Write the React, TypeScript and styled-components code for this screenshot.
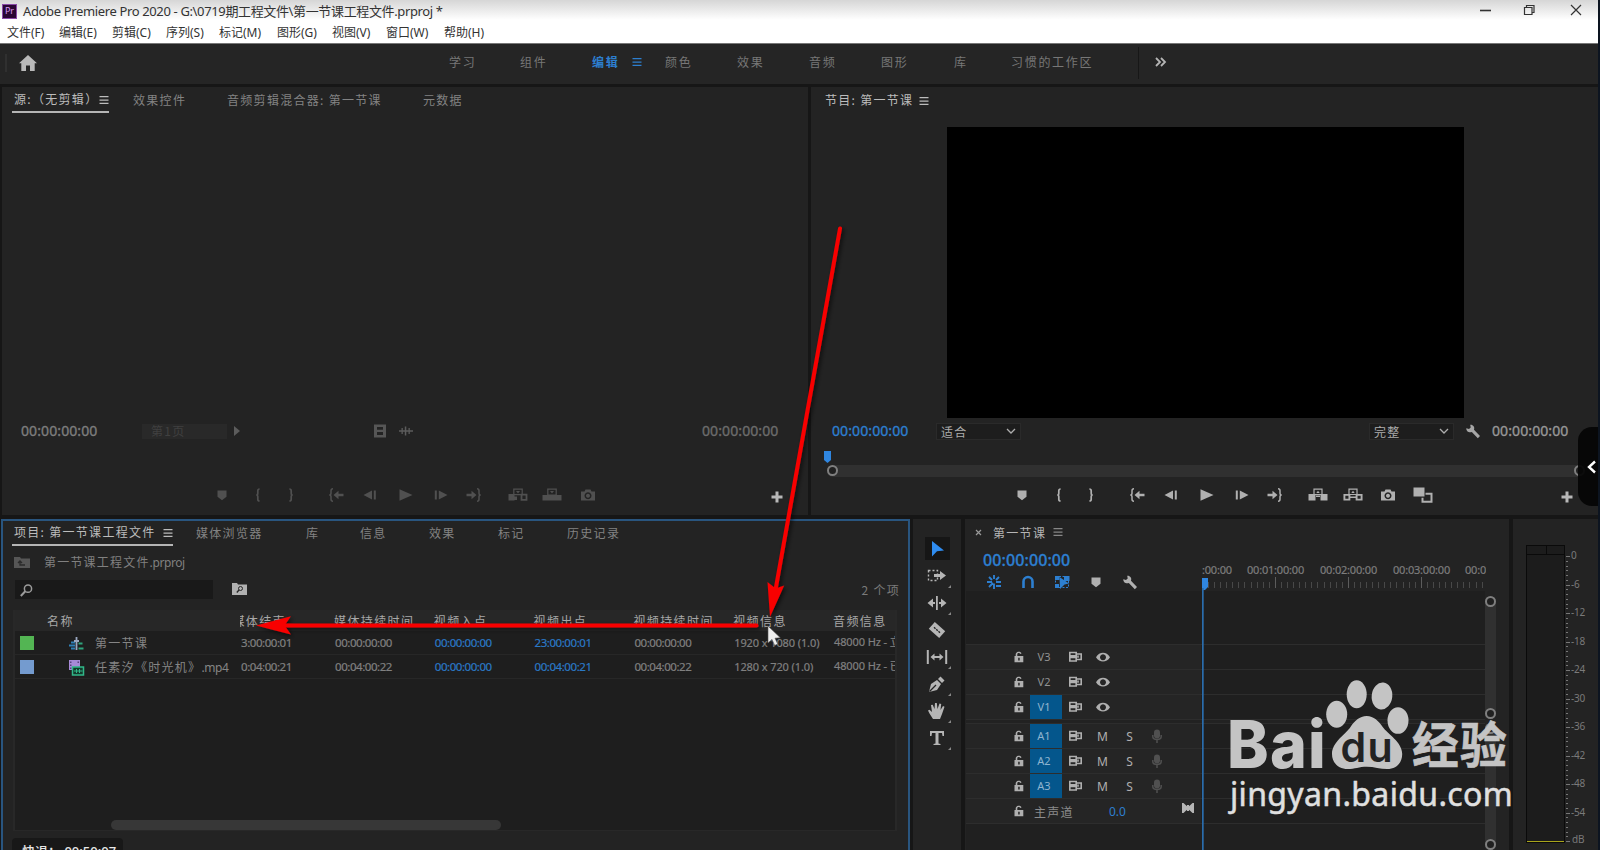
import React from 'react';
import styled, { createGlobalStyle } from 'styled-components';

type IconName =
  | 'marker' | 'markIn' | 'markOut' | 'goIn' | 'stepBack' | 'play' | 'stepFwd' | 'goOut'
  | 'insert' | 'overwrite' | 'lift' | 'extract' | 'camera' | 'compare' | 'plus' | 'burger'
  | 'wrench' | 'chevron' | 'lock' | 'sync' | 'eye' | 'mic' | 'film' | 'wave';

// every glyph is drawn in a 22 x 18 box
const glyphs: Record<IconName, React.ReactNode> = {
  marker: <path d="M6.5 4.5h9v6.200L11 14.200 6.500 10.700z" />,
  markIn: <path d="M12.600 3q-1.800 0-1.800 1.800v2.400Q10.800 9 9.300 9q1.500 0 1.500 1.800v2.400q0 1.800 1.800 1.800" fill="none" stroke="currentColor" strokeWidth="1.700" />,
  markOut: <path d="M9.400 3q1.800 0 1.800 1.800v2.400Q11.200 9 12.700 9q-1.500 0-1.500 1.800v2.400q0 1.800-1.800 1.800" fill="none" stroke="currentColor" strokeWidth="1.700" />,
  goIn: (
    <>
      <path d="M8 2.800q-2 0-2 2v2.400Q6 9 4.300 9 6 9 6 10.800v2.400q0 2 2 2" fill="none" stroke="currentColor" strokeWidth="1.500" />
      <path d="M8.500 9l5-4.300v3H18.500v2.600H13.500v3z" />
    </>
  ),
  stepBack: <path d="M4.500 9l8.500-4.600v9.200zM14.800 4.400h2v9.200h-2z" />,
  play: <path d="M4.500 3.200L17.500 9 4.500 14.800z" />,
  stepFwd: <path d="M4.800 4.400h2v9.200h-2zM8.800 4.400L17.500 9l-8.700 4.600z" />,
  goOut: (
    <>
      <path d="M14 2.800q2 0 2 2v2.400Q16 9 17.700 9 16 9 16 10.800v2.400q0 2-2 2" fill="none" stroke="currentColor" strokeWidth="1.500" />
      <path d="M13.500 9l-5-4.300v3h-5v2.600h5v3z" />
    </>
  ),
  insert: (
    <>
      <path d="M1.500 8h6v6.500h-6zM7 10.500h3v3.500H7z" />
      <path d="M6.800 3.200h8.400v5.500H6.800z" fill="none" stroke="currentColor" strokeWidth="1.200" />
      <path d="M9 5h4l-2 2.600z" />
      <path d="M14.500 8.700h5v5.100h-5z" fill="none" stroke="currentColor" strokeWidth="1.800" />
    </>
  ),
  overwrite: (
    <>
      <path d="M1.500 9h19v5.500h-19z" />
      <path d="M6.800 3.200h8.400V9H6.800z" fill="none" stroke="currentColor" strokeWidth="1.200" />
      <path d="M9 5h4l-2 2.600z" />
    </>
  ),
  lift: (
    <>
      <path d="M1.500 8h7v6.500h-7zM13.500 8h7v6.500h-7zM9 9.500h4v1.500H9z" />
      <path d="M7 3.200h8v5.300H7z" fill="none" stroke="currentColor" strokeWidth="1.200" />
      <path d="M9.300 7l1.700-2.200L12.700 7z" />
    </>
  ),
  extract: (
    <>
      <path d="M2.400 8.900h5v4.700h-5zM14.600 8.900h5v4.700h-5z" fill="none" stroke="currentColor" strokeWidth="1.900" />
      <path d="M7 3.200h8v5.300H7z" fill="none" stroke="currentColor" strokeWidth="1.200" />
      <path d="M9.300 7l1.700-2.200L12.700 7zM8 10.500h6v1.500H8z" />
    </>
  ),
  camera: (
    <path fillRule="evenodd" d="M4 5.500h3.500l1-2h5l1 2H18v9H4zM11 6.300a3.500 3.500 0 1 0 .01 0zM11 7.800a2 2 0 1 1-.01 0z" />
  ),
  compare: (
    <>
      <path d="M1.500 1.500h11v9h-11z" />
      <path d="M13.500 7.700h6v8h-9v-4" fill="none" stroke="currentColor" strokeWidth="2" />
    </>
  ),
  plus: <path d="M9.500 3.500h3v4h4v3h-4v4h-3v-4h-4v-3h4z" />,
  burger: <path d="M6.500 5h9v1.300h-9zM6.500 8.400h9v1.300h-9zM6.500 11.800h9v1.300h-9z" />,
  wrench: <path d="M4.300 6.200L7 7l1.700-1.500-.5-2.700C11 2.500 13 5 12 7.800l6 6.200-2.200 2.200-6-6.200C7 11 4 9 4.300 6.200z" />,
  chevron: <path d="M7 7l4 4 4-4" fill="none" stroke="currentColor" strokeWidth="1.300" />,
  lock: (
    <path fillRule="evenodd" d="M6.500 8h1.200V6.200C7.700 3.500 13 3 13.500 5.500l-1.300.4C11.700 4.500 9.300 5 9.300 6.400V8h6v6.300H6.500zM10.200 9.700v2.900h1.500V9.700z" />
  ),
  sync: (
    <path d="M4.800 4.500h6.400v3.400H4.800zM4.800 9.500h6.400V13H4.800zM11.200 6h5v5.500h-5M13 7.500v2.300" fill="none" stroke="currentColor" strokeWidth="1.600" />
  ),
  eye: (
    <path fillRule="evenodd" d="M4 9.200C7.500 3.400 14.500 3.400 18 9.200 14.500 15 7.500 15 4 9.200zM11 6.200a3 3 0 1 0 .01 0z" />
  ),
  mic: (
    <>
      <rect x="8" y="2.500" width="6" height="9" rx="3" />
      <path d="M6.800 8v1.500q0 3 4.200 3t4.200-3V8M11 12.500V16" fill="none" stroke="currentColor" strokeWidth="1.500" />
    </>
  ),
  film: <path fillRule="evenodd" d="M5 2.500h12v13H5zM8 5v2.800h6V5zM8 10v3h6v-3z" opacity=".9" />,
  wave: <path d="M4 8.300h14v1.400H4zM6.500 6h1.300v6H6.500zM9.800 4.500h1.500v9H9.800zM13.500 6h1.300v6h-1.300z" />,
};

const Icon: React.FC<{ name: IconName }> = ({ name }) => (
  <GlyphSvg viewBox="0 0 22 18" fill="currentColor">
    {glyphs[name]}
  </GlyphSvg>
);

const menus = [
  ['文件(F)', 52], ['编辑(E)', 53], ['剪辑(C)', 54], ['序列(S)', 53], ['标记(M)', 58],
  ['图形(G)', 55], ['视图(V)', 54], ['窗口(W)', 58], ['帮助(H)', 50],
] as const;

const workspaces = [
  ['学习', 71], ['组件', 72], ['编辑', 73], ['颜色', 72], ['效果', 72],
  ['音频', 72], ['图形', 73], ['库', 57], ['习惯的工作区', 127],
] as const;

const transport: [IconName, number][] = [
  ['marker', 0], ['markIn', 14.5], ['markOut', 10.5], ['goIn', 23.5], ['stepBack', 12],
  ['play', 14], ['stepFwd', 13], ['goOut', 11],
];
const sourceTransport: [IconName, number][] = [
  ...transport, ['insert', 21.5], ['overwrite', 12.5], ['camera', 13.5],
];
const programTransport: [IconName, number][] = [
  ...transport, ['lift', 21.5], ['extract', 12.5], ['camera', 13.5], ['compare', 13],
];

const columns = ['媒体持续时间', '视频入点', '视频出点', '视频持续时间', '视频信息', '音频信息'];

const clips = [
  {
    kind: 'sequence', color: '#53b553', name: '第一节课', ext: '', end: '3:00:00:01',
    cells: ['00:00:00:00', '00:00:00:00', '23:00:00:01', '00:00:00:00', '1920 x 1080 (1.0)', '48000 Hz - 立体声'],
  },
  {
    kind: 'clip', color: '#749bcf', name: '任素汐《时光机》', ext: '.mp4', end: '0:04:00:21',
    cells: ['00:04:00:22', '00:00:00:00', '00:04:00:21', '00:04:00:22', '1280 x 720 (1.0)', '48000 Hz - 已压缩'],
  },
];

const dbMarks = ['0', '-6', '-12', '-18', '-24', '-30', '-36', '-42', '-48', '-54'];

const Transport: React.FC<{ items: [IconName, number][]; dim?: boolean }> = ({ items, dim }) => (
  <TransportRow $dim={dim}>
    {items.map(([name, gap]) => (
      <TransportSlot key={name} $gap={gap}>
        <Icon name={name} />
      </TransportSlot>
    ))}
    <AddButton>
      <Icon name="plus" />
    </AddButton>
  </TransportRow>
);

const TitleBar = () => (
  <Header>
    <TitleRow>
      <AppBadge>Pr</AppBadge>
      <TitleText>Adobe Premiere Pro 2020 - G:\0719期工程文件\第一节课工程文件.prproj *</TitleText>
      <WindowButtons viewBox="0 0 110 20" fill="none" stroke="#333" strokeWidth="1.200">
        <path d="M4 9.500h11" strokeWidth="1.600" />
        <path d="M48.500 6.500h7.500v7h-7.500zM50.500 6.500V4.500h7.500v7h-2" />
        <path d="M95 4l10 10M105 4L95 14" />
      </WindowButtons>
    </TitleRow>
    <MenuRow>
      {menus.map(([label, w]) => (
        <MenuItem key={label} $w={w}>{label}</MenuItem>
      ))}
    </MenuRow>
  </Header>
);

const WorkspaceBar = () => (
  <Workspaces>
    <HomeGrip />
    <HomeIcon viewBox="0 0 18 16" fill="#b9b9b9">
      <path d="M9 0l9 8.200h-2.300V16H11v-5.500H7V16H2.300V8.200H0z" />
    </HomeIcon>
    {workspaces.map(([label, w]) => (
      <WorkspaceItem key={label} $w={w} $active={label === '编辑'}>
        {label}
        {label === '编辑' && <Icon name="burger" />}
      </WorkspaceItem>
    ))}
    <MoreWorkspaces>
      <svg width="12" height="10" viewBox="0 0 12 10" fill="none" stroke="#b5b5b5" strokeWidth="1.800">
        <path d="M1 1l4 4-4 4M6 1l4 4-4 4" />
      </svg>
    </MoreWorkspaces>
  </Workspaces>
);

const SourceMonitor = () => (
  <SourcePanel>
    <Tabs>
      <Tab $w={119} $active>
        <TabUnderline $w={97}>源:（无剪辑）<Icon name="burger" /></TabUnderline>
      </Tab>
      <Tab $w={94}>效果控件</Tab>
      <Tab $w={196}>音频剪辑混合器: 第一节课</Tab>
      <Tab $w={60}>元数据</Tab>
    </Tabs>
    <MonitorSpace />
    <SourceControls>
      <TimeCode $color="#7d7d7d">00:00:00:00</TimeCode>
      <PageSelect>第1页</PageSelect>
      <PageArrow />
      <MediaToggles>
        <Icon name="film" />
        <Icon name="wave" />
      </MediaToggles>
      <TimeCode $color="#6c6c6c">00:00:00:00</TimeCode>
    </SourceControls>
    <Transport items={sourceTransport} dim />
  </SourcePanel>
);

const ProgramMonitor = () => (
  <ProgramPanel>
    <Tabs>
      <Tab $w={110} $active>节目: 第一节课<Icon name="burger" /></Tab>
    </Tabs>
    <Screen />
    <ProgramControls>
      <TimeCode $color="#2d7fd0">00:00:00:00</TimeCode>
      <Select $gap={27}>适合<Icon name="chevron" /></Select>
      <Select $gap={348}>完整<Icon name="chevron" /></Select>
      <Icon name="wrench" />
      <TimeCode $color="#979797">00:00:00:00</TimeCode>
    </ProgramControls>
    <Scrubber>
      <ScrubHead viewBox="0 0 8 12"><path d="M0 0h7v9l-3.500 3L0 9z" fill="#2f86e0" /></ScrubHead>
      <ScrubTrack>
        <Knob />
        <Knob />
      </ScrubTrack>
    </Scrubber>
    <Transport items={programTransport} />
  </ProgramPanel>
);

const SequenceIcon = () => (
  <svg width="17" height="15" viewBox="0 0 17 15" fill="none" strokeWidth="1.500">
    <path d="M3 6.500h4M1 9.500h6M3 12.500h4" stroke="#2f7fb5" strokeWidth="2" />
    <path d="M8.500 1v13M6 5h5" stroke="#9aa7c0" strokeWidth="1.800" />
    <path d="M10.500 7.500h4M10.500 12.500h5" stroke="#2fa37c" strokeWidth="2.200" />
  </svg>
);

const ClipIcon = () => (
  <svg width="17" height="16" viewBox="0 0 17 16">
    <path d="M1 0h11v10H1z" fill="#a88ad8" />
    <path d="M2 1.500h1.500v1.500H2zM2 4.500h1.500V6H2zM2 7.500h1.500V9H2zM9.500 1.500H11V3H9.500z" fill="#59427f" />
    <path d="M4.500 7h11v8h-11z" fill="#133a2c" stroke="#31b888" strokeWidth="1.500" />
    <path d="M6 11h8.500M8.500 9v4M11.500 9v4" stroke="#31b888" />
  </svg>
);

const ProjectPanel = () => (
  <Project>
    <Tabs>
      <Tab $w={182} $active>
        <TabUnderline $w={161}>项目: 第一节课工程文件<Icon name="burger" /></TabUnderline>
      </Tab>
      <Tab $w={110}>媒体浏览器</Tab>
      <Tab $w={54}>库</Tab>
      <Tab $w={69}>信息</Tab>
      <Tab $w={69}>效果</Tab>
      <Tab $w={69}>标记</Tab>
      <Tab $w={60}>历史记录</Tab>
    </Tabs>
    <Breadcrumb>
      <svg width="16" height="12" viewBox="0 0 16 12">
        <path d="M0 1h6l1 1.500h9V12H0z" fill="#565656" />
        <path d="M11 9H6V5.500M4 7l2-2 2 2" fill="none" stroke="#2a2a2a" strokeWidth="1.300" />
      </svg>
      <div>第一节课工程文件<Latin>.prproj</Latin></div>
    </Breadcrumb>
    <SearchRow>
      <SearchBox>
        <svg width="13" height="13" viewBox="0 0 13 13" fill="none" stroke="#9b9b9b">
          <circle cx="8" cy="4.700" r="3.600" strokeWidth="1.500" />
          <path d="M5.300 7.300L.8 12" strokeWidth="2" />
        </svg>
      </SearchBox>
      <svg width="15" height="12" viewBox="0 0 15 12">
        <path d="M0 0h5l1 1.500h9V12H0z" fill="#b0b0b0" />
        <circle cx="8.500" cy="5.500" r="2" fill="none" stroke="#262626" />
        <path d="M7 7L4.800 9.500" stroke="#262626" strokeWidth="1.300" />
      </svg>
      <ItemCount>2 个项</ItemCount>
    </SearchRow>
    <ClipTable>
      <ClipHead>
        <NameHead>名称</NameHead>
        <CutCell><span>媒体结束</span></CutCell>
        {columns.map((c) => <HeadCell key={c}>{c}</HeadCell>)}
      </ClipHead>
      {clips.map((clip) => (
        <ClipRow key={clip.name}>
          <Swatch $color={clip.color} />
          <KindIcon>{clip.kind === 'sequence' ? <SequenceIcon /> : <ClipIcon />}</KindIcon>
          <ClipName>{clip.name}<Latin>{clip.ext}</Latin></ClipName>
          <DataCell>{clip.end}</DataCell>
          {clip.cells.map((cell, i) => (
            <DataCell key={i} $link={i === 1 || i === 2} $info={i > 3}>{cell}</DataCell>
          ))}
        </ClipRow>
      ))}
      <ClipScroll />
    </ClipTable>
    <SeekToast>快退： 00:50:07</SeekToast>
  </Project>
);

const toolGlyphs: React.ReactNode[] = [
  <path d="M6 3l12 9.500-7 .8L6 18.500z" fill="#2f8cf0" />,
  <>
    <path d="M2.500 5.500h9v10h-9z" fill="none" stroke="#b5b5b5" strokeWidth="1.400" strokeDasharray="2 2" />
    <path d="M8 9h6V6l6 4.500-6 4.500v-3H8z" />
  </>,
  <path d="M10 4h1.800v14H10zM1.500 11l5.500-4.500V10h2v2H7v3.500zM20.500 11L15 6.500V10h-2v2h2v3.500z" />,
  <g transform="rotate(42 11 11)">
    <path fillRule="evenodd" d="M4 6.500h14v9H4zM7 10.300h2v1.400H7zM10 10.300h2v1.400h-2zM13 10.300h2v1.400h-2z" />
  </g>,
  <path d="M.8 4h2v14h-2zM19.200 4h2v14h-2zM4.500 11l4-3.500V10h5V7.500l4 3.500-4 3.500V12h-5v2.500z" />,
  <>
    <path d="M3 19l2-8 6-4 4 4-4 6z" />
    <path d="M12 6l2.500-2.500 4 4L16 10z" />
    <path d="M3.500 18.500L10 12" stroke="#232323" strokeWidth="1.200" />
  </>,
  <path d="M7 19l-3.500-5.500L2 10.500l1.500-.7L6 12 5 5l1.700-.3L8.500 9 9 3h1.800l.7 6L13.500 3.500l1.700.5-.7 6 2.500-4 1.500.8L16 14l-2 5z" />,
  <path d="M4 4h14v5h-1.500L16 6h-3.500v10.500l2 .5v1h-7v-1l2-.5V6H6l-.5 3H4z" />,
];

const ToolStrip = () => (
  <Tools>
    {toolGlyphs.map((g, i) => (
      <ToolButton key={i} $selected={i === 0} $more={![0, 3].includes(i)}>
        <svg width="22" height="22" viewBox="0 0 22 22" fill="#b5b5b5">{g}</svg>
      </ToolButton>
    ))}
  </Tools>
);

const Track: React.FC<{ name: string }> = ({ name }) => {
  const audio = name[0] === 'A';
  return (
    <TrackRow>
      <TrackHeader>
        <Icon name="lock" />
        <TrackName $on={audio || name === 'V1'}>{name}</TrackName>
        <Icon name="sync" />
        {audio ? <span>M</span> : <Icon name="eye" />}
        {audio && <span>S</span>}
        {audio && <MicCell><Icon name="mic" /></MicCell>}
      </TrackHeader>
      <Lane />
    </TrackRow>
  );
};

const minorTicks = Array.from({ length: 46 }, (_, i) => 8 + i * 6.08);

const Timeline = () => (
  <TimelinePanel>
    <SequenceTab>
      <svg width="7" height="7" viewBox="0 0 7 7" stroke="#999" strokeWidth="1.200"><path d="M1 1l5 5M6 1L1 6" /></svg>
      <b>第一节课</b>
      <Icon name="burger" />
    </SequenceTab>
    <TimelineTop>
      <TimelineInfo>
        <BigTime>00:00:00:00</BigTime>
        <TimelineTools>
          <svg width="18" height="16" viewBox="0 0 18 16" stroke="#2d7fd0" strokeWidth="1.900" fill="none">
            <path d="M9 1v4M4 3l3 3M14 3l-3 3M2 8h5M4 13l4-4M9 9.500V15M11 8h5M11 12h5" />
          </svg>
          <svg width="18" height="16" viewBox="0 0 18 16" stroke="#2d7fd0" strokeWidth="2.600" fill="none">
            <path d="M4.500 14V7.500a4.500 4.500 0 0 1 9 0V14" />
          </svg>
          <svg width="18" height="16" viewBox="0 0 18 16" fill="#2d7fd0">
            <path d="M2 2h4.500v4H2zM11 2h5.500v5H11zM2 10h4v4H2z" />
            <path d="M6.500 3l9.500 6.500-4.500 1L7 15z" />
            <path d="M2.500 2.500h13v11h-13z" fill="none" stroke="#2d7fd0" strokeDasharray="2 1.500" />
          </svg>
          <Icon name="marker" />
          <Icon name="wrench" />
        </TimelineTools>
      </TimelineInfo>
      <Ruler>
        <RulerLabels>
          <RulerLabel $w={45}>:00:00</RulerLabel>
          <RulerLabel $w={73}>00:01:00:00</RulerLabel>
          <RulerLabel $w={73}>00:02:00:00</RulerLabel>
          <RulerLabel $w={72}>00:03:00:00</RulerLabel>
          <RulerLabel $w={60}>00:04:00:00</RulerLabel>
        </RulerLabels>
        <svg width="285" height="14" viewBox="0 0 285 14">
          {minorTicks.map((x, i) => {
            const major = i % 12 === 11;
            return <rect key={i} x={Math.round(x)} y={major ? 1 : 6} width="1" height={major ? 11 : 6} fill={major ? '#5c5c5c' : '#484848'} />;
          })}
        </svg>
      </Ruler>
    </TimelineTop>
    <TimelineBody>
      <TrackList>
        <TrackSpacer />
        {['V3', 'V2', 'V1'].map((n) => <Track key={n} name={n} />)}
        <TrackDivider />
        {['A1', 'A2', 'A3'].map((n) => <Track key={n} name={n} />)}
        <TrackRow>
          <MasterHeader>
            <Icon name="lock" />
            <MasterName>主声道</MasterName>
            <MasterGain>0.0</MasterGain>
            <MasterMeterIcon viewBox="0 0 12 10" fill="#b5b5b5"><path d="M0 0h1.500L5 3.200V2h2v1.200L10.500 0H12v10h-1.500L7 6.800V8H5V6.800L1.500 10H0z" /></MasterMeterIcon>
          </MasterHeader>
          <Lane />
        </TrackRow>
        <TrackEnd />
      </TrackList>
      <TrackScrolls>
        <VScroll $h={123}><Knob /><Knob /></VScroll>
        <VScroll $h={127}><Knob /><Knob /></VScroll>
      </TrackScrolls>
    </TimelineBody>
    <Playhead viewBox="0 0 8 273">
      <path d="M1 0h6v9l-3 3H1z" fill="#2f86e0" />
      <path d="M1 10h1.700v263H1z" fill="#2a6cab" />
    </Playhead>
  </TimelinePanel>
);

const AudioMeter = () => (
  <MeterPanel>
    <MeterBox>
      <MeterClip><i /><i /></MeterClip>
      <MeterLevel />
    </MeterBox>
    <svg width="6" height="300" viewBox="0 0 6 300">
      {Array.from({ length: 61 }, (_, i) => (
        <rect key={i} x="1" y={Math.round(11 + i * 4.75)} width={i % 6 === 0 ? 4 : 2} height="1" fill="#777" />
      ))}
    </svg>
    <MeterLabels>
      {dbMarks.map((m) => <MeterLabel key={m}>{m}</MeterLabel>)}
      <MeterLabel>dB</MeterLabel>
    </MeterLabels>
  </MeterPanel>
);

const Annotations = () => (
  <ArrowLayer viewBox="0 0 1600 850">
    <defs>
      <filter id="soft" x="-20%" y="-20%" width="140%" height="140%">
        <feDropShadow dx="2" dy="2" stdDeviation="2" floodColor="#000" floodOpacity=".6" />
      </filter>
    </defs>
    <path d="M768 626v17l4-3.600 2.700 6 3-1.400-2.700-5.800 5.300-.5z" fill="#eee" stroke="#555" strokeWidth=".6" />
    <g fill="#f80606" filter="url(#soft)">
      <path d="M840 228.500L775.500 590" stroke="#f80606" strokeWidth="4" strokeLinecap="round" />
      <path d="M770 617l-2.500-35 8.200 6.500 8.500-3z" />
      <path d="M756.500 625.500H284" stroke="#f80606" strokeWidth="4" strokeLinecap="round" />
      <path d="M256 625.500l35-9.300-6.500 9.300 6.500 9z" />
    </g>
  </ArrowLayer>
);

const Watermark = () => (
  <WatermarkSvg viewBox="1220 675 300 145" fill="#c4c4c4">
    <text x="1227" y="768" fontFamily="Inter" fontWeight="800" fontSize="65.500" textLength="100" lengthAdjust="spacingAndGlyphs">Bai</text>
    <ellipse cx="1336.700" cy="714.300" rx="10.500" ry="13.500" />
    <ellipse cx="1356.700" cy="694.300" rx="10" ry="14" />
    <ellipse cx="1382" cy="696" rx="10.300" ry="13.500" transform="rotate(6 1382 696)" />
    <ellipse cx="1398" cy="720.500" rx="10.500" ry="13.300" />
    <path d="M1366.700 716c7 0 12 5 16 11 5 7 19.500 15 19.500 27 0 9-6 15-15 15-7 0-13-2.300-20.500-2.300s-12 2.300-19 2.300c-9 0-15.700-6-15.700-15 0-12 13.500-19.500 18.500-27 4-6 9-11 16.200-11z" />
    <text x="1340.500" y="761.500" fontFamily="Inter" fontWeight="600" fontSize="41" fill="#232323" textLength="53.500" lengthAdjust="spacingAndGlyphs">du</text>
    <text x="1412" y="762.500" fontFamily="Noto Sans CJK SC" fontWeight="700" fontSize="49" stroke="#c4c4c4" strokeWidth=".7" textLength="96" lengthAdjust="spacingAndGlyphs">经验</text>
    <text x="1230" y="805.500" fontFamily="Noto Sans" fontWeight="400" fontSize="32" fill="#e0e0e0" stroke="#e0e0e0" strokeWidth=".5" textLength="284">jingyan.baidu.com</text>
  </WatermarkSvg>
);

const App: React.FC = () => {
  return (
    <Window>
      <GlobalStyle />
      <TitleBar />
      <WorkspaceBar />
      <UpperRow>
        <SourceMonitor />
        <ProgramMonitor />
      </UpperRow>
      <LowerRow>
        <ProjectPanel />
        <ToolStrip />
        <Timeline />
        <AudioMeter />
      </LowerRow>
      <SideHandle>
        <svg width="10" height="14" viewBox="0 0 10 14" fill="none" stroke="#fff" strokeWidth="2.400"><path d="M8 1.500L2 7l6 5.500" /></svg>
      </SideHandle>
      <Watermark />
      <Annotations />
    </Window>
  );
};

const GlobalStyle = createGlobalStyle`
  * { box-sizing: border-box; }
  body { margin: 0; background: #161616; }
`;

const GlyphSvg = styled.svg`
  width: 22px;
  height: 18px;
  flex: none;
`;

const Latin = styled.span`
  font-family: 'Noto Sans', sans-serif;
  letter-spacing: -0.4px;
`;

const Window = styled.div`
  position: relative;
  display: flex;
  flex-direction: column;
  width: 1600px;
  height: 850px;
  overflow: hidden;
  background: #161616;
  border-right: 2px solid #0c1420;
  font-family: 'Noto Sans CJK SC', sans-serif;
  font-size: 12px;
  letter-spacing: 1.3px;
  color: #868686;
  white-space: nowrap;
`;

const Header = styled.header`
  height: 43px;
  flex: none;
  background: linear-gradient(#d6d6d6, #fff 20px);
  color: #333;
  font-family: 'Noto Sans', 'Noto Sans CJK SC', sans-serif;
  letter-spacing: 0;
`;

const TitleRow = styled.div`
  display: flex;
  align-items: center;
  height: 22px;
  padding-left: 2px;
`;

const AppBadge = styled.div`
  width: 15px;
  height: 15px;
  margin-right: 6px;
  border: 1px solid #8a4aa8;
  background: #2a0634;
  color: #d79cf0;
  font-size: 9px;
  line-height: 12px;
  text-align: center;
`;

const TitleText = styled.div`
  width: 1453px;
  font-size: 13px;
  letter-spacing: -0.36px;
  line-height: 22px;
`;

const WindowButtons = styled.svg`
  width: 110px;
  height: 20px;
`;

const MenuRow = styled.nav`
  display: flex;
  height: 21px;
  padding-left: 7px;
  line-height: 22px;
`;

const MenuItem = styled.div<{ $w: number }>`
  width: ${({ $w }) => $w}px;
`;

const Workspaces = styled.div`
  display: flex;
  align-items: center;
  flex: none;
  height: 41px;
  margin-bottom: 3px;
  padding-bottom: 2px;
  border-top: 1px solid #777;
  background: #252525;
`;

const HomeGrip = styled.div`
  width: 2px;
  height: 18px;
  margin: 0 12px 0 5px;
  background: #303030;
`;

const HomeIcon = styled.svg`
  width: 18px;
  height: 16px;
  margin-right: 412px;
`;

const WorkspaceItem = styled.div<{ $w: number; $active?: boolean }>`
  display: flex;
  align-items: center;
  width: ${({ $w }) => $w}px;
  margin-top: -4px;
  color: ${({ $active }) => ($active ? '#2d7fd0' : '#777')};
  font-weight: ${({ $active }) => ($active ? 700 : 400)};
  letter-spacing: 1.7px;

  svg { margin: 2px 0 0 7px; }
`;

const MoreWorkspaces = styled.div`
  display: flex;
  align-items: center;
  height: 32px;
  padding: 0 0 3px 16px;
  border-left: 1px solid #171717;
`;

const UpperRow = styled.div`
  display: flex;
  flex: none;
  gap: 3px;
  height: 428px;
  margin-bottom: 4px;
  padding-left: 2px;
`;

const Panel = styled.section`
  display: flex;
  flex-direction: column;
  background: #232323;
`;

const SourcePanel = styled(Panel)`
  width: 806px;
`;

const ProgramPanel = styled(Panel)`
  width: 787px;
`;

const Tabs = styled.div`
  display: flex;
  flex: none;
  height: 26px;
  padding-left: 12px;
  line-height: 26px;

  ${ProgramPanel} & { padding-left: 14px; }
`;

const Tab = styled.div<{ $w: number; $active?: boolean }>`
  display: flex;
  align-items: center;
  width: ${({ $w }) => $w}px;
  color: ${({ $active }) => ($active ? '#bcbcbc' : '#828282')};

  svg { margin-top: 2px; }
`;

const TabUnderline = styled.div<{ $w: number }>`
  display: flex;
  align-items: center;
  justify-content: space-between;
  width: ${({ $w }) => $w}px;
  height: 26px;
  margin-left: -2px;
  padding-left: 2px;
  border-bottom: 2px solid #b5b5b5;

  svg { margin: 2px -6px 0 -7px; }
`;

const MonitorSpace = styled.div`
  flex: 1;
`;

const ControlRow = styled.div`
  display: flex;
  align-items: center;
  flex: none;
`;

const SourceControls = styled(ControlRow)`
  height: 18px;
  margin-bottom: 46px;
  padding: 0 29px 0 19px;
  color: #5c5c5c;
`;

const ProgramControls = styled(ControlRow)`
  height: 18px;
  margin-top: 4px;
  padding-left: 21px;
  color: #a5a5a5;
`;

const TimeCode = styled.div<{ $color: string }>`
  width: 77px;
  flex: none;
  font-family: 'Noto Sans', sans-serif;
  font-size: 14px;
  letter-spacing: 0.1px;
  line-height: 18px;
  color: ${({ $color }) => $color};
  -webkit-text-stroke: 0.35px;
`;

const PageSelect = styled.div`
  width: 85px;
  height: 15px;
  margin-left: 44px;
  padding-left: 9px;
  background: #292929;
  color: #404040;
  line-height: 14px;
`;

const PageArrow = styled.div`
  margin-left: 7px;
  border: 5px solid transparent;
  border-left: 6px solid #5c5c5c;
  border-right: 0;
`;

const MediaToggles = styled.div`
  display: flex;
  gap: 4px;
  margin: 0 auto 0 129px;
`;

const Screen = styled.div`
  width: 517px;
  height: 291px;
  margin: 14px 0 0 136px;
  background: #000;
`;

const Select = styled.div<{ $gap: number }>`
  display: flex;
  align-items: center;
  justify-content: space-between;
  width: 85px;
  height: 17px;
  margin-left: ${({ $gap }) => $gap}px;
  padding-left: 4px;
  border: 1px solid #2a2a2a;
  background: #1d1d1d;
  color: #adadad;

  svg { margin-right: -2px; }
  & + svg { margin: 0 8px; }
`;

const Scrubber = styled.div`
  height: 40px;
  padding: 11px 0 0 13px;
`;

const ScrubHead = styled.svg`
  display: block;
  width: 8px;
  height: 12px;
`;

const ScrubTrack = styled.div`
  display: flex;
  justify-content: space-between;
  width: 758px;
  height: 12px;
  margin: 2px 0 0 3px;
  border-radius: 6px;
  background: #303030;
`;

const Knob = styled.i`
  width: 11px;
  height: 11px;
  border: 2.500px solid #7f7f7f;
  border-radius: 50%;
  background: #202020;
`;

const TransportRow = styled.div<{ $dim?: boolean }>`
  display: flex;
  align-items: center;
  flex: none;
  height: 18px;
  margin: auto 0 11px;
  padding-left: 208.5px;
  color: ${({ $dim }) => ($dim ? '#505050' : '#b0b0b0')};

  ${ProgramPanel} & { padding-left: 200px; }
`;

const TransportSlot = styled.div<{ $gap: number }>`
  display: flex;
  margin-left: ${({ $gap }) => $gap}px;
`;

const AddButton = styled.div`
  display: flex;
  margin: 4px 20px 0 auto;
  color: #b8b8b8;
`;

const LowerRow = styled.div`
  display: flex;
  height: 331px;
  flex: none;
`;

const Project = styled(Panel)`
  position: relative;
  width: 909px;
  margin: 0 3px 0 1px;
  border: 2px solid #29557f;
  border-bottom: 0;

  ${Tabs} { height: 24px; padding-left: 11px; line-height: 24px; }
  ${TabUnderline} { height: 25px; }
`;

const Breadcrumb = styled.div`
  display: flex;
  align-items: center;
  gap: 14px;
  height: 33px;
  padding: 1px 0 0 11px;
  color: #808080;
  letter-spacing: 1.2px;
`;

const SearchRow = styled.div`
  display: flex;
  align-items: center;
  height: 22px;
  padding: 0 8px 0 12px;
`;

const SearchBox = styled.div`
  width: 198px;
  height: 19px;
  margin-right: 19px;
  padding: 3px 5px;
  background: #191919;
`;

const ItemCount = styled.div`
  margin-left: auto;
  color: #7a7a7a;
`;

const ClipTable = styled.div`
  flex: none;
  width: 884px;
  height: 221px;
  margin: 10px 0 0 10px;
  overflow: hidden;
  border: solid #282828;
  border-width: 0 2px 1px 2px;
  background: #1e1e1e;
`;

const ClipHead = styled.div`
  display: flex;
  height: 21px;
  background: #272727;
  color: #a8a8a8;
  letter-spacing: 1.4px;
  line-height: 22px;
`;

const NameHead = styled.div`
  width: 225px;
  flex: none;
  padding-left: 32px;
`;

const HeadCell = styled.div`
  width: 99.8px;
  flex: none;
`;

// the first media column is scrolled partly out of view
const CutCell = styled.div`
  display: flex;
  justify-content: flex-end;
  width: 46px;
  margin-right: 48px;
  flex: none;
  overflow: hidden;
`;

const ClipRow = styled.div`
  display: flex;
  align-items: center;
  height: 24px;
  border-bottom: 1px solid #272727;
  color: #858585;
`;

const Swatch = styled.div<{ $color: string }>`
  width: 14px;
  height: 14px;
  margin-left: 5px;
  flex: none;
  background: ${({ $color }) => $color};
`;

const KindIcon = styled.div`
  display: flex;
  width: 17px;
  margin: 2px 10px 0 34px;
  flex: none;
`;

const ClipName = styled.div`
  width: 146px;
  flex: none;
`;

const DataCell = styled.div<{ $link?: boolean; $info?: boolean }>`
  width: 99.8px;
  flex: none;
  font-family: 'Noto Sans', 'Noto Sans CJK SC', sans-serif;
  font-size: ${({ $info }) => ($info ? 11 : 11.5)}px;
  letter-spacing: ${({ $info }) => ($info ? -0.1 : -0.45)}px;
  line-height: 18px;
  color: ${({ $link }) => ($link ? '#2b79c6' : '#808080')};
  -webkit-text-stroke: 0.2px;

  ${ClipName} + & { width: 94px; }
  &:last-child { height: 18px; margin-top: -1px; }
`;

const ClipScroll = styled.div`
  width: 390px;
  height: 10px;
  margin: 141px 0 0 96px;
  border-radius: 5px;
  background: #373737;
`;

const SeekToast = styled.div`
  position: absolute;
  left: 9px;
  bottom: -18px;
  width: 111px;
  height: 30px;
  padding-left: 10px;
  border-radius: 4px;
  background: #181818;
  color: #e8e8e8;
  font-family: 'Noto Sans', 'Noto Sans CJK SC', sans-serif;
  font-size: 13px;
  font-weight: 500;
  letter-spacing: 0;
  line-height: 27px;
`;

const Tools = styled(Panel)`
  align-items: center;
  gap: 4px;
  width: 48px;
  margin-right: 4px;
  padding-top: 18px;
`;

const ToolButton = styled.div<{ $selected?: boolean; $more?: boolean }>`
  display: flex;
  align-items: center;
  justify-content: center;
  flex: none;
  width: 25px;
  height: 23px;
  background: ${({ $selected }) => ($selected ? '#161616' : 'none')};

  &::after {
    content: '';
    display: ${({ $more }) => ($more ? 'block' : 'none')};
    align-self: flex-end;
    margin: 0 -3px -1px 0;
    border-left: 3px solid transparent;
    border-bottom: 3px solid #888;
  }
`;

const TimelinePanel = styled(Panel)`
  position: relative;
  width: 544px;
  margin-right: 4px;
`;

const SequenceTab = styled.div`
  display: flex;
  align-items: center;
  height: 28px;
  padding: 0 0 1px 10px;

  b {
    margin: 0 1px 0 11px;
    font-weight: 400;
    color: #b5b5b5;
  }
`;

const TimelineTop = styled.div`
  display: flex;
  height: 45px;
`;

const TimelineInfo = styled.div`
  width: 235px;
  padding: 4px 0 0 18px;
  color: #b0b0b0;
`;

const BigTime = styled.div`
  font-family: 'Noto Sans', sans-serif;
  font-size: 16px;
  font-weight: 500;
  letter-spacing: 0.1px;
  line-height: 20px;
  color: #2d7fd0;
  -webkit-text-stroke: 0.3px;
`;

const TimelineTools = styled.div`
  display: flex;
  align-items: center;
  gap: 16px;
  margin: 3px 0 0 2px;

  svg:nth-child(4) { margin-left: -2px; }
  svg:nth-child(5) { margin-left: -4px; }
`;

const Ruler = styled.div`
  width: 286px;
  overflow: hidden;
`;

const RulerLabels = styled.div`
  display: flex;
  height: 30px;
  padding: 16px 0 0 2px;
`;

const RulerLabel = styled.div<{ $w: number }>`
  width: ${({ $w }) => $w}px;
  flex: none;
  font-family: 'Noto Sans', sans-serif;
  font-size: 11px;
  letter-spacing: -0.2px;
  line-height: 16px;
  color: #7d7d7d;
  -webkit-text-stroke: 0.2px;
`;

const TimelineBody = styled.div`
  display: flex;
  flex: 1;
`;

const TrackList = styled.div`
  width: 520px;
  padding-left: 1px;
`;

const TrackSpacer = styled.div`
  height: 53px;
  background: #1f1f1f;
`;

const TrackDivider = styled.div`
  height: 4px;
  border-top: 1px solid #2d2d2d;
  background: #222;
`;

const TrackEnd = styled.div`
  height: 27px;
  border-top: 1px solid #2d2d2d;
  background: #202020;
`;

const TrackRow = styled.div`
  display: flex;
  height: 25px;
  border-top: 1px solid #2d2d2d;
`;

const TrackHeader = styled.div`
  display: grid;
  grid-template-columns: 22px 32px repeat(4, 27px);
  place-items: center;
  width: 235px;
  padding-left: 42px;
  background: #252525;
  color: #b0b0b0;
  font-family: 'Noto Sans', sans-serif;
  font-size: 12px;
  letter-spacing: 0;
`;

const TrackName = styled.div<{ $on?: boolean }>`
  width: 32px;
  height: 24px;
  padding-right: 4px;
  background: ${({ $on }) => ($on ? '#04568c' : 'none')};
  color: ${({ $on }) => ($on ? '#8fb4cf' : '#929292')};
  font-size: 11px;
  line-height: 24px;
  text-align: center;
`;

const MicCell = styled.div`
  display: flex;
  color: #505050;
`;

const MasterHeader = styled.div`
  display: flex;
  align-items: center;
  width: 235px;
  padding-left: 42px;
  background: #252525;
  color: #b0b0b0;
`;

const MasterName = styled.div`
  width: 79px;
  padding-left: 4px;
  color: #8c8c8c;
`;

const MasterGain = styled.div`
  width: 73px;
  font-family: 'Noto Sans', sans-serif;
  letter-spacing: 0;
  color: #2d7fd0;
`;

const MasterMeterIcon = styled.svg`
  width: 12px;
  height: 10px;
  margin-top: -7px;
`;

const Lane = styled.div`
  flex: 1;
  background: #1f1f1f;
`;

const TrackScrolls = styled.div`
  display: flex;
  flex-direction: column;
  gap: 4px;
  padding-top: 5px;
`;

const VScroll = styled.div<{ $h: number }>`
  display: flex;
  flex-direction: column;
  justify-content: space-between;
  width: 11px;
  height: ${({ $h }) => $h}px;
  flex: none;
  border-radius: 6px;
  background: #303030;
`;

const Playhead = styled.svg`
  position: absolute;
  left: 236px;
  top: 59px;
  width: 8px;
  height: 273px;
`;

const MeterPanel = styled(Panel)`
  flex-direction: row;
  width: 85px;
  padding: 26px 0 0 13px;
`;

const MeterBox = styled.div`
  width: 39px;
  height: 298px;
  border: 1px solid #0a0a0a;
  background: #1c1c1c;
`;

const MeterClip = styled.div`
  display: grid;
  grid-template-columns: 1fr 1fr;
  height: 9px;
  border-bottom: 1px solid #0a0a0a;

  i + i { border-left: 1px solid #0a0a0a; }
`;

const MeterLevel = styled.div`
  height: 1px;
  margin-top: 286px;
  background: #a8a41c;
`;

const MeterLabels = styled.div`
  padding-top: 2px;
`;

const MeterLabel = styled.div`
  height: 28.5px;
  padding-left: 0;
  font-family: 'Noto Sans', sans-serif;
  font-size: 10px;
  letter-spacing: -0.2px;
  line-height: 17px;
  color: #7a7a7a;

  &:last-child { margin-top: -1px; padding-left: 1px; }
`;

const SideHandle = styled.div`
  position: absolute;
  right: 0;
  top: 427px;
  display: flex;
  align-items: center;
  justify-content: flex-end;
  width: 20px;
  height: 79px;
  padding-right: 1px;
  border-radius: 14px 0 0 14px;
  background: rgba(5, 5, 5, 0.94);
`;

const WatermarkSvg = styled.svg`
  position: absolute;
  left: 1220px;
  top: 675px;
  width: 300px;
  height: 145px;
`;

const ArrowLayer = styled.svg`
  position: absolute;
  left: 0;
  top: 0;
  width: 1600px;
  height: 850px;
  pointer-events: none;
`;

export default App;
